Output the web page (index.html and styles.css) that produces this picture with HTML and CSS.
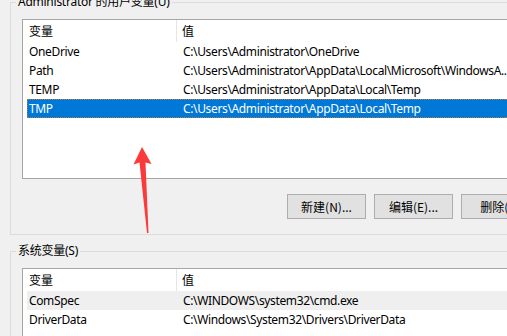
FILE: index.html
```html
<!DOCTYPE html>
<html lang="zh-CN">
<head>
<meta charset="utf-8">
<title>环境变量</title>
<link rel="stylesheet" href="styles.css">
</head>
<body>
<fieldset class="group group-user">
  <legend class="group-title">Administrator 的用户变量(U)</legend>
  <div class="list list-user">
    <div class="list-head"><span class="col-name">变量</span><span class="col-value">值</span></div>
    <div class="row"><span class="col-name">OneDrive</span><span class="col-value">C:\Users\Administrator\OneDrive</span></div>
    <div class="row"><span class="col-name">Path</span><span class="col-value">C:\Users\Administrator\AppData\Local\Microsoft\WindowsA...</span></div>
    <div class="row"><span class="col-name">TEMP</span><span class="col-value">C:\Users\Administrator\AppData\Local\Temp</span></div>
    <div class="row selected"><span class="col-name">TMP</span><span class="col-value">C:\Users\Administrator\AppData\Local\Temp</span></div>
  </div>
  <div class="buttons">
    <button class="btn">新建(N)...</button>
    <button class="btn">编辑(E)...</button>
    <button class="btn">删除(D)</button>
  </div>
</fieldset>
<fieldset class="group group-system">
  <legend class="group-title">系统变量(S)</legend>
  <div class="list list-system">
    <div class="list-head"><span class="col-name">变量</span><span class="col-value">值</span></div>
    <div class="row hover"><span class="col-name">ComSpec</span><span class="col-value">C:\WINDOWS\system32\cmd.exe</span></div>
    <div class="row"><span class="col-name">DriverData</span><span class="col-value">C:\Windows\System32\Drivers\DriverData</span></div>
  </div>
</fieldset>
<svg class="arrow" width="507" height="336" viewBox="0 0 507 336">
  <polygon points="142,147 151.5,164 145.5,162.5 148.5,233 147,233 139.5,162.5 133.5,164.5" fill="#fb3a3a"/>
</svg>
</body>
</html>
```

FILE: styles.css
```css
html, body {
  margin: 0;
  padding: 0;
}
body {
  width: 507px;
  height: 336px;
  overflow: hidden;
  position: relative;
  background: #f0f0f0;
  font-family: "Noto Sans", "Noto Sans CJK SC", sans-serif;
  font-size: 12px;
  color: #000;
}
.group {
  box-sizing: border-box;
  width: 542px;
  margin: 0 0 0 10px;
  padding: 11px 11px 15px 11px;
  border: 1px solid #dcdcdc;
  min-width: 0;
}
.group-user {
  margin-top: -4px;
}
.group-system {
  margin-top: 10px;
}
.group-title {
  margin-left: -6px;
  padding: 0 2px;
  line-height: 12px;
  letter-spacing: -0.25px;
  font-family: "Noto Sans", "Noto Sans CJK SC", sans-serif;
}
.list {
  background: #fff;
  border: 1px solid #a6a6a6;
  box-sizing: border-box;
}
.list-user {
  height: 160px;
}
.list-system {
  height: 120px;
}
.list-head {
  display: flex;
  height: 22px;
  align-items: stretch;
  padding-left: 6px;
  line-height: 22px;
  font-family: "Noto Sans CJK SC", sans-serif;
}
.list-head .col-name {
  width: 147px;
  flex: none;
  border-right: 1px solid #e5e5e5;
}
.list-head .col-value {
  padding-left: 5px;
}
.row {
  display: flex;
  height: 19px;
  box-sizing: border-box;
  margin-left: 4px;
  padding-left: 1px;
  border: 1px solid transparent;
  line-height: 17px;
  white-space: nowrap;
  letter-spacing: -0.36px;
}
.row .col-name {
  width: 147px;
  flex: none;
}
.row .col-value {
  padding-left: 7px;
}
.row.selected {
  background: #0078d7;
  color: #fff;
  border: 1px dotted #b7783c;
}
.row.hover {
  background: #efefef;
}
.buttons {
  display: flex;
  justify-content: flex-end;
  gap: 8px;
  margin-top: 15px;
}
.btn {
  box-sizing: border-box;
  width: 79px;
  height: 25px;
  margin: 0;
  padding: 0;
  background: #e1e1e1;
  border: 1px solid #adadad;
  font-family: "Noto Sans CJK SC", "Noto Sans", sans-serif;
  font-size: 12px;
  color: #000;
}
.arrow {
  position: absolute;
  left: 0;
  top: 0;
  pointer-events: none;
}
```
